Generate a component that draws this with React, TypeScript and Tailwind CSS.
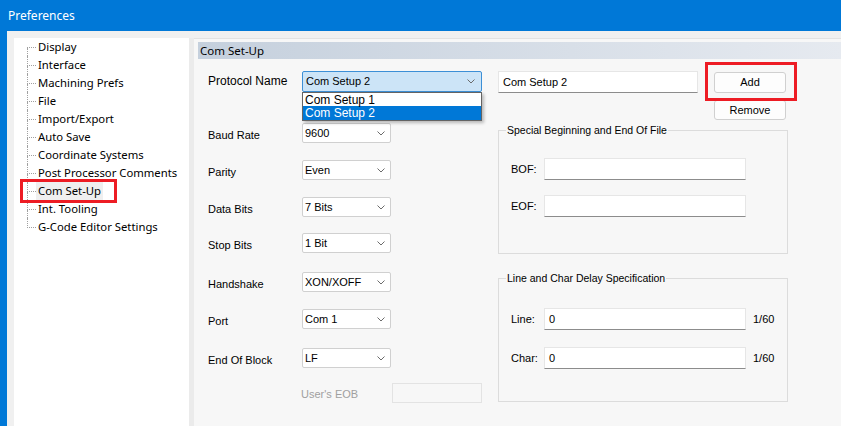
import React from 'react';

const treeItems = [
  'Display',
  'Interface',
  'Machining Prefs',
  'File',
  'Import/Export',
  'Auto Save',
  'Coordinate Systems',
  'Post Processor Comments',
  'Com Set-Up',
  'Int. Tooling',
  'G-Code Editor Settings',
];

function Chevron() {
  return (
    <svg width="8" height="5" viewBox="0 0 8 5" className="shrink-0">
      <polyline points="0.5,0.5 4,4 7.5,0.5" fill="none" stroke="#6b6b6b" strokeWidth="1" />
    </svg>
  );
}

function Combo({ value }: { value: string }) {
  return (
    <div className="flex h-[20px] w-[89px] items-center justify-between rounded-[2px] border border-[#d0d0d0] bg-white pl-[2px] pr-[5px] text-[11px] text-black">
      <span>{value}</span>
      <Chevron />
    </div>
  );
}

function FormRow({ label, value, className }: { label: string; value: string; className: string }) {
  return (
    <div className={`flex ${className}`}>
      <div className="flex h-[20px] w-[94px] items-center pt-[5px] text-[11px] text-black">{label}</div>
      <Combo value={value} />
    </div>
  );
}

function TextBox({ value = '', className = '' }: { value?: string; className?: string }) {
  return (
    <div
      className={`flex h-[22px] items-start border border-[#e6e6e6] border-b-[#8c8c8c] bg-white pl-[4px] pt-[2px] text-[11px] text-black ${className}`}
    >
      {value}
    </div>
  );
}

function GroupBox({ title, className, children }: { title: string; className: string; children: React.ReactNode }) {
  return (
    <div className={`flex h-[124px] w-[290px] flex-col items-start border border-[#dcdcdc] ${className}`}>
      <div className="-mt-[8px] ml-[7px] bg-[#f7f7f7] px-[1px] text-[10.5px] leading-[14px] whitespace-nowrap text-black">
        {title}
      </div>
      <div className="self-stretch pl-[12px]">{children}</div>
    </div>
  );
}

function Tree() {
  return (
    <div className="mt-[7px] ml-[7px] w-[175px] bg-white pl-[13px]" style={{ fontFamily: '"Noto Sans", sans-serif' }}>
      {treeItems.map((item, i) => {
        const first = i === 0;
        const last = i === treeItems.length - 1;
        const selected = item === 'Com Set-Up';
        return (
          <div key={item} className="flex h-[18px]">
            <div className="flex w-[9px] flex-col">
              <div
                className={`h-[10px] border-b border-dotted border-[#a0a0a0] ${first ? '' : 'border-l'}`}
              />
              <div className={`flex-1 border-dotted border-[#a0a0a0] ${last ? '' : 'border-l'}`} />
            </div>
            <div className="relative flex items-center">
              <span
                className={`flex h-[18px] items-center pl-[2px] pr-[2px] text-[11.3px] leading-none text-black ${
                  selected ? 'bg-[#efefef]' : ''
                }`}
              >
                {item}
              </span>
              {selected && (
                <div className="pointer-events-none absolute -top-[3px] -bottom-[3px] -left-[16px] -right-[14px] border-[3px] border-[#ed1c24]" />
              )}
            </div>
          </div>
        );
      })}
    </div>
  );
}

export default function App() {
  return (
    <div
      className="flex h-[426px] w-[841px] flex-col overflow-hidden bg-[#0078d7]"
      style={{ fontFamily: '"Liberation Sans", Arial, sans-serif' }}
    >
      {/* Title bar */}
      <div
        className="flex h-[31px] shrink-0 items-center pl-[8px] text-[12px] text-white"
        style={{ fontFamily: '"Noto Sans", sans-serif' }}
      >
        Preferences
      </div>

      {/* Body */}
      <div className="ml-[7px] flex flex-1 bg-[#f0f0f0]">
        <Tree />

        {/* Splitter */}
        <div className="mt-[7px] w-[5px] bg-[#ebebeb]" />

        {/* Right panel */}
        <div className="mt-[7px] flex-1 border-t border-[#e2e2e2] bg-[#f7f7f7] pl-[4px] pt-[3px]">
          <div
            className="flex h-[17px] items-center bg-gradient-to-r from-[#c5d0dd] to-[#e6eaf0] pl-[2px] text-[11.5px] text-black"
            style={{ fontFamily: '"Noto Sans", sans-serif' }}
          >
            Com Set-Up
          </div>

          <div className="flex pl-[10px]">
            {/* Left column */}
            <div className="w-[274px]">
              <div className="mt-[12px] flex">
                <div className="w-[94px] pt-[1px] text-[12px] text-black">Protocol Name</div>
                <div className="relative">
                  <div className="flex h-[21px] w-[180px] items-center justify-between rounded-[2px] border border-[#3c8fd6] bg-[#cce4f7] pl-[3px] pr-[6px] text-[11px] text-black">
                    <span>Com Setup 2</span>
                    <Chevron />
                  </div>
                  <div className="absolute left-0 top-[21px] z-10 w-[180px] border border-[#646464] bg-white text-[12px] shadow-[2px_2px_3px_rgba(0,0,0,0.25)]">
                    <div className="flex h-[13px] items-center pl-[2px] text-black">Com Setup 1</div>
                    <div className="flex h-[14px] items-center bg-[#0078d7] pl-[2px] text-white">Com Setup 2</div>
                  </div>
                </div>
              </div>

              <FormRow label="Baud Rate" value="9600" className="mt-[31px]" />
              <FormRow label="Parity" value="Even" className="mt-[17px]" />
              <FormRow label="Data Bits" value="7 Bits" className="mt-[17px]" />
              <FormRow label="Stop Bits" value="1 Bit" className="mt-[16px]" />
              <FormRow label="Handshake" value="XON/XOFF" className="mt-[19px]" />
              <FormRow label="Port" value="Com 1" className="mt-[17px]" />
              <FormRow label="End Of Block" value="LF" className="mt-[19px]" />

              <div className="mt-[15px] flex pl-[93px]">
                <div className="flex h-[20px] w-[91px] items-center pt-[3px] text-[11px] text-[#a0a0a0]">User's EOB</div>
                <div className="h-[20px] w-[90px] border border-[#e3e3e3] bg-[#f7f7f7]" />
              </div>
            </div>

            {/* Right column */}
            <div className="ml-[16px] w-[290px]">
              <div className="mt-[12px] flex">
                <TextBox value="Com Setup 2" className="w-[200px]" />
                <div className="ml-[16px] flex flex-col">
                  <div className="relative mt-[1px]">
                    <button className="flex h-[21px] w-[72px] items-center justify-center rounded-[3px] border border-[#d0d0d0] bg-[#fdfdfd] text-[11px] text-black">
                      Add
                    </button>
                    <div className="pointer-events-none absolute -top-[10px] -left-[9px] -right-[11px] -bottom-[8px] border-[3px] border-[#ed1c24]" />
                  </div>
                  <button className="mt-[7px] flex h-[20px] w-[72px] items-center justify-center rounded-[3px] border border-[#d0d0d0] bg-[#fdfdfd] text-[11px] text-black">
                    Remove
                  </button>
                </div>
              </div>

              <GroupBox title="Special Beginning and End Of File" className="mt-[10px]">
                <div className="mt-[21px] flex items-center">
                  <span className="w-[33px] text-[11px] text-black">BOF:</span>
                  <TextBox className="w-[202px]" />
                </div>
                <div className="mt-[15px] flex items-center">
                  <span className="w-[33px] text-[11px] text-black">EOF:</span>
                  <TextBox className="w-[202px]" />
                </div>
              </GroupBox>

              <GroupBox title="Line and Char Delay Specification" className="mt-[24px]">
                <div className="mt-[23px] flex items-center">
                  <span className="w-[33px] text-[11px] text-black">Line:</span>
                  <TextBox value="0" className="w-[202px]" />
                  <span className="ml-[7px] text-[11px] text-black">1/60</span>
                </div>
                <div className="mt-[17px] flex items-center">
                  <span className="w-[33px] text-[11px] text-black">Char:</span>
                  <TextBox value="0" className="w-[202px]" />
                  <span className="ml-[7px] text-[11px] text-black">1/60</span>
                </div>
              </GroupBox>
            </div>
          </div>
        </div>
      </div>
    </div>
  );
}
